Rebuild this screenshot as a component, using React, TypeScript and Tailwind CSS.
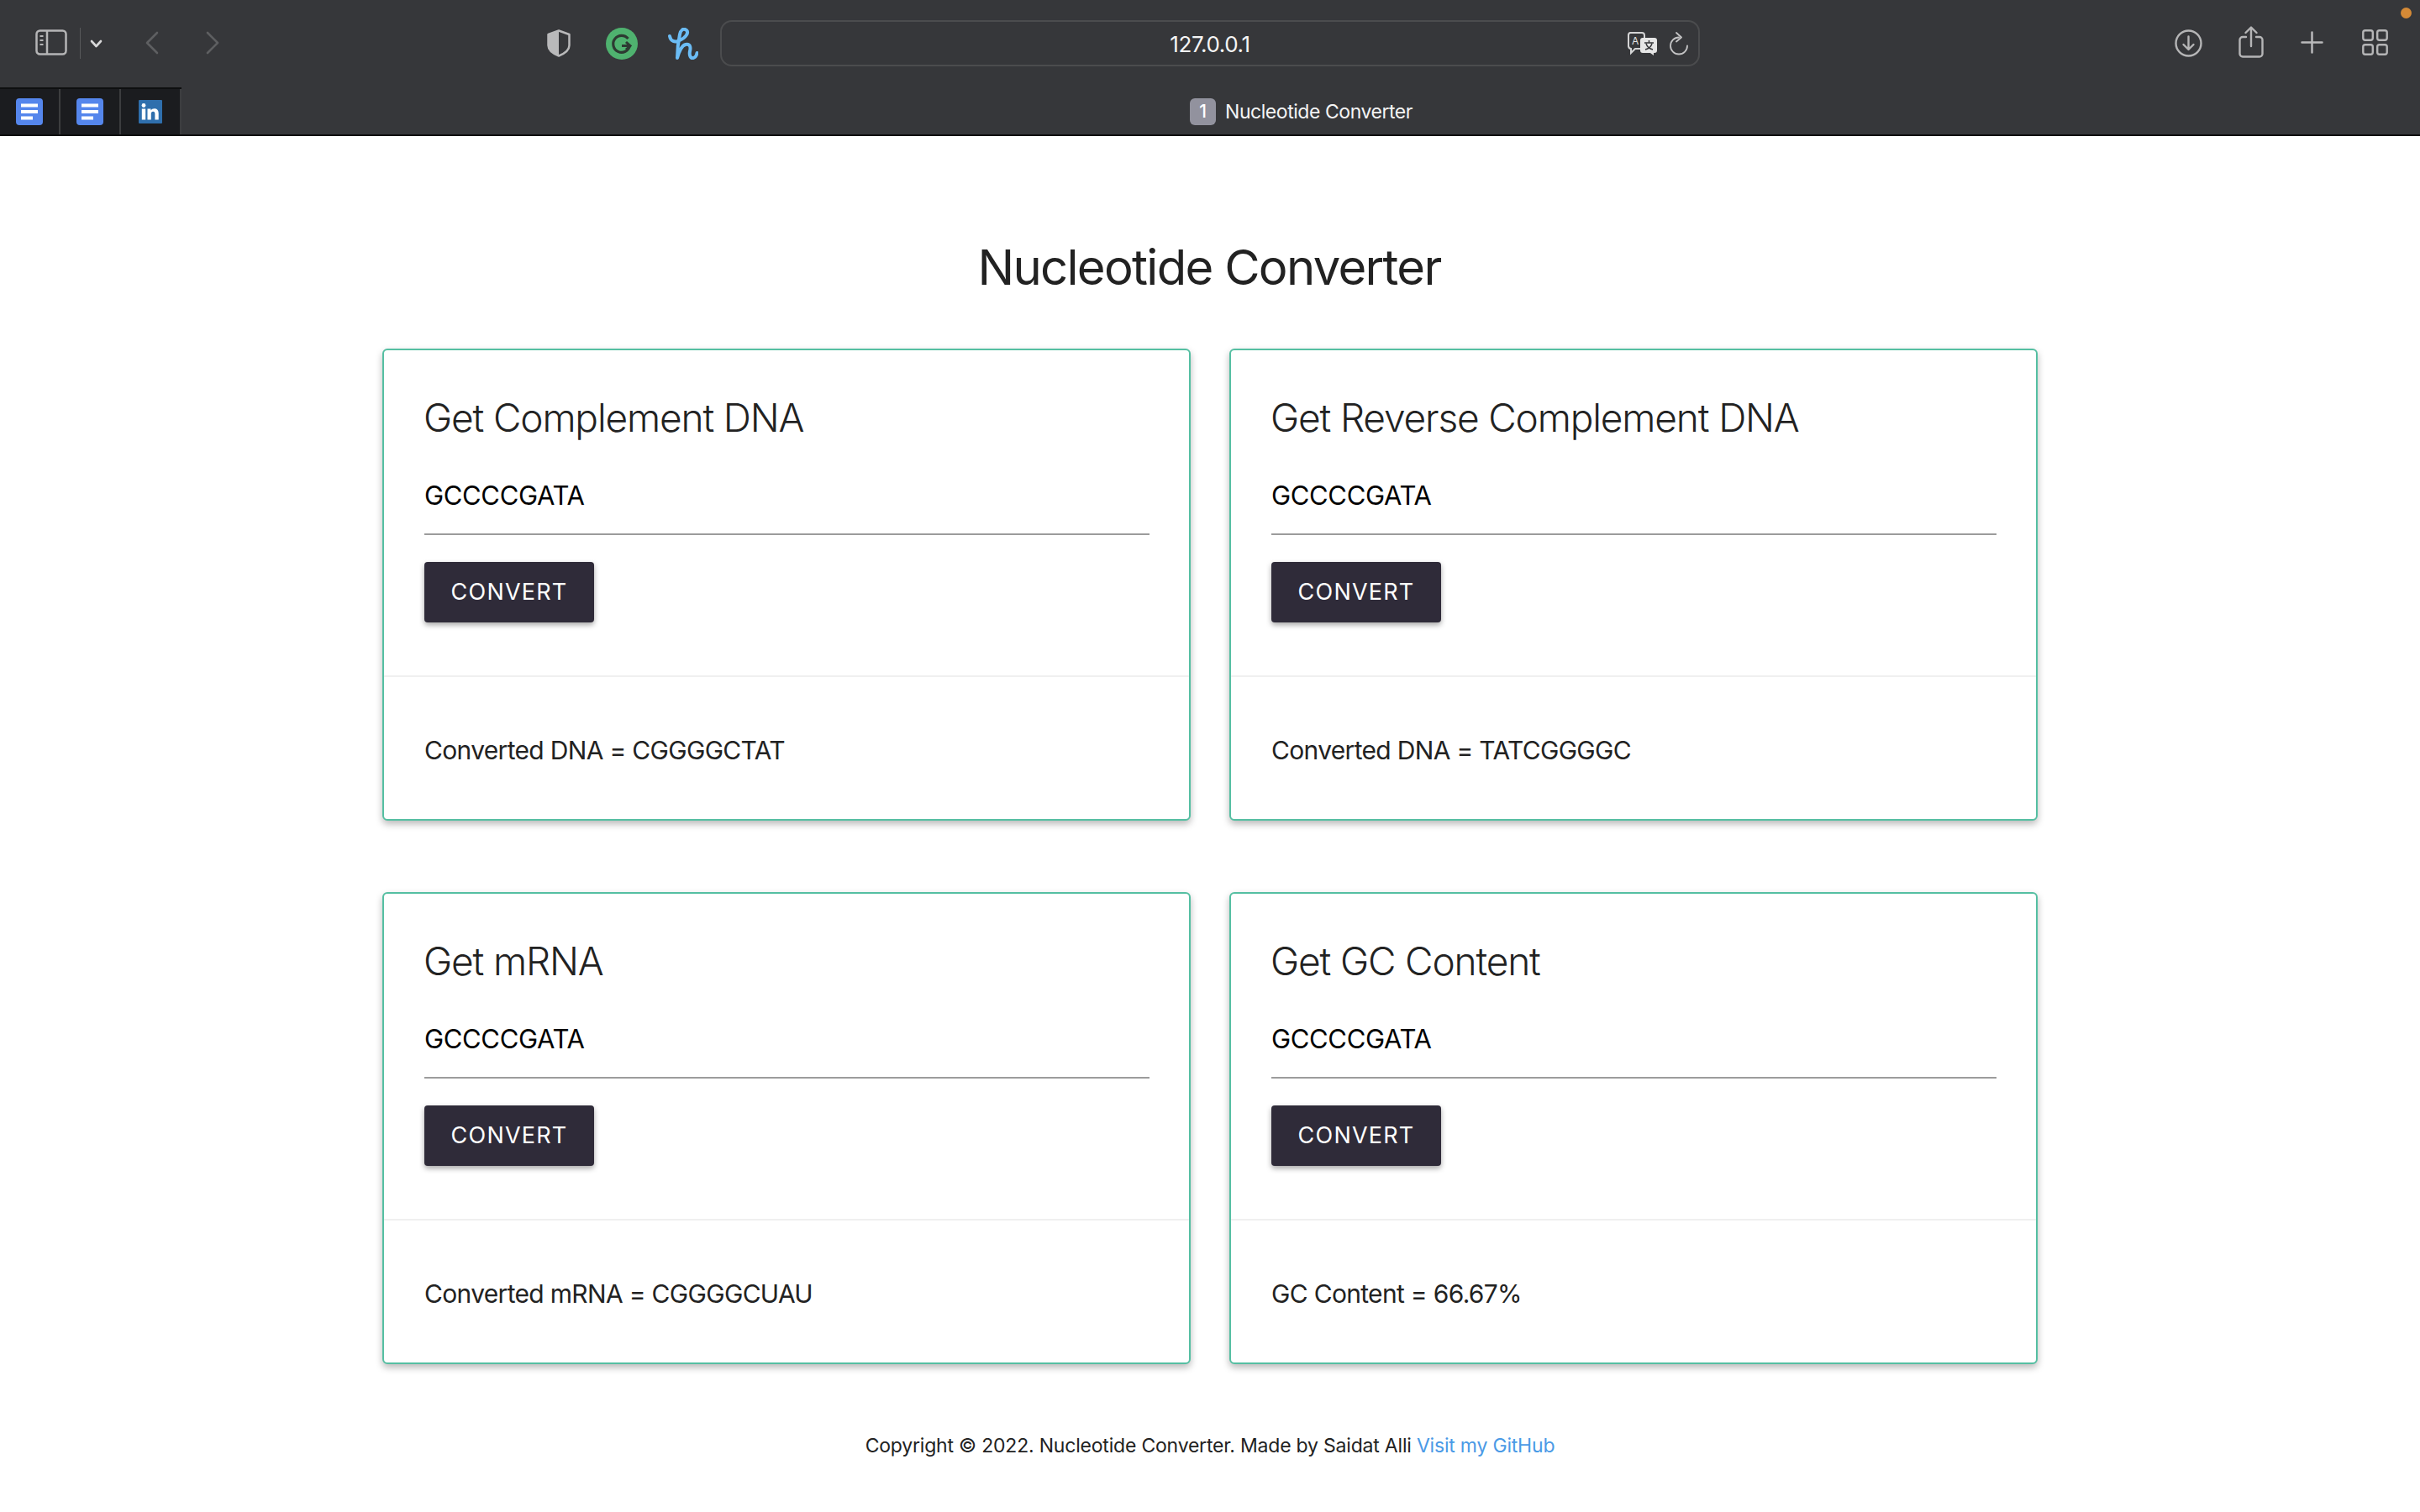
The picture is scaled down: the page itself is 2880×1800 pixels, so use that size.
import React from "react";

function Doc() {
  return (
    <svg width="32" height="32" viewBox="0 0 32 32">
      <rect x="0" y="0" width="32" height="32" rx="4" fill="#5586ec" />
      <rect x="6" y="6.5" width="20" height="4" fill="#fff" />
      <rect x="6" y="14" width="20" height="4" fill="#fff" />
      <rect x="6" y="21.5" width="14" height="4" fill="#fff" />
    </svg>
  );
}

function Linked() {
  return (
    <svg width="28" height="28" viewBox="0 0 28 28">
      <rect width="28" height="28" rx="1" fill="#2f6fad" />
      <circle cx="6" cy="6.5" r="2.4" fill="#fff" />
      <rect x="3.8" y="10.5" width="4.4" height="13" fill="#fff" />
      <path d="M10.5 10.5h4v2c1-1.6 2.4-2.3 4.2-2.3 3.300 0 5 2 5 5.500v7.800h-4.300v-7c0-1.900-.7-2.800-2.200-2.800s-2.400 1-2.400 2.800v7h-4.300z" fill="#fff" />
    </svg>
  );
}

function Toolbar() {
  return (
    <header className="h-[162px] bg-[#36373a] border-b-2 border-[#0c0c0d] flex flex-col relative shrink-0">
      <div className="h-[104px] flex items-start relative">
        <div className="absolute left-[42px] top-[35px]">
          <svg width="38" height="31" viewBox="0 0 38 31" fill="none" stroke="#b5b5b6" strokeWidth="2.5">
            <rect x="1.500" y="1.500" width="35" height="28" rx="4" />
            <path d="M14 1.500v28" />
            <path d="M5.500 8h4M5.500 13h4M5.500 18h4" strokeWidth="2" />
          </svg>
        </div>
        <div className="absolute left-[95px] top-[33px] w-px h-[37px] bg-[#57585a]" />
        <div className="absolute left-[107px] top-[47px]">
          <svg width="15" height="10" viewBox="0 0 15 10" fill="none" stroke="#d8d8d9" strokeWidth="2.600" strokeLinecap="round" strokeLinejoin="round">
            <path d="M2 2l5.500 6L13 2" />
          </svg>
        </div>
        <div className="absolute left-[173px] top-[37px]">
          <svg width="16" height="28" viewBox="0 0 16 28" fill="none" stroke="#5e5f61" strokeWidth="2.600" strokeLinecap="round" strokeLinejoin="round">
            <path d="M14 2L2 14l12 12" />
          </svg>
        </div>
        <div className="absolute left-[245px] top-[37px]">
          <svg width="16" height="28" viewBox="0 0 16 28" fill="none" stroke="#5e5f61" strokeWidth="2.600" strokeLinecap="round" strokeLinejoin="round">
            <path d="M2 2l12 12L2 26" />
          </svg>
        </div>
        <div className="absolute left-[651px] top-[35px]">
          <svg width="28" height="33" viewBox="0 0 28 33">
            <path d="M14 1.500L26.500 6v13c0 5.500-5 9.500-12.500 12.500C6.500 28.500 1.500 24.500 1.500 19V6z" fill="none" stroke="#b9b9ba" strokeWidth="2.500" strokeLinejoin="round" />
            <path d="M14 1.500L1.500 6v13c0 5.500 5 9.500 12.500 12.500z" fill="#b9b9ba" />
          </svg>
        </div>
        <div className="absolute left-[721px] top-[33px]">
          <svg width="38" height="38" viewBox="0 0 38 38" fill="none">
            <circle cx="19" cy="19" r="19" fill="#4fb26f" />
            <path d="M26.500 13A10 10 0 1 0 28.500 21.500" stroke="#2d3a32" strokeWidth="3.200" />
            <path d="M19 21.500H29M24 17l5 4.500-5 4.500" stroke="#2d3a32" strokeWidth="3" />
          </svg>
        </div>
        <div className="absolute left-[795px] top-[33px]">
          <svg width="36" height="38" viewBox="0 0 36 38" fill="none" stroke="#6bbcf5" strokeWidth="4" strokeLinecap="round" strokeLinejoin="round">
            <path d="M2 10C3 16 8 18 14 15C21 12 25 6 22 3C18 0 15 3 14 8C12 17 11 27 11 36C13 29 16 21 21 20C27 19 27 24 26 28C25 33 27 37 30 36C32 35.500 34 33 34.500 30" />
          </svg>
        </div>
        <div className="absolute left-[857px] top-[24px] w-[1166px] h-[55px] rounded-[14px] border-2 border-[#4b4c4e] flex items-center justify-center">
          <span className="text-[26px] text-[#f4f4f4] font-['Inter',sans-serif] tracking-[-0.4px] pt-[2px]">127.0.0.1</span>
          <div className="absolute left-[1077px] top-[12px]">
            <svg width="37" height="28" viewBox="0 0 37 28" fill="none">
              <path d="M4 1h14a3 3 0 0 1 3 3v13a3 3 0 0 1-3 3H10l-5 5v-5a3.500 3.500 0 0 1-3-3V4a3 3 0 0 1 2-3z" stroke="#d4d4d5" strokeWidth="2" fill="#36373a" />
              <text x="6" y="15" fontSize="12" fill="#e4e4e4" fontFamily="Inter, sans-serif">A</text>
              <path d="M19 7h14a3 3 0 0 1 3 3v12a3 3 0 0 1-3 3h-1v3l-4-3h-9a3 3 0 0 1-3-3V10a3 3 0 0 1 3-3z" fill="#e6e6e6" />
              <path d="M21 13h11M26.500 10v3M23 14c1 3 4 6 8 7M30 14c-1 3-4 6-8 7" stroke="#36373a" strokeWidth="1.500" />
            </svg>
          </div>
          <div className="absolute left-[1127px] top-[12px]">
            <svg width="24" height="28" viewBox="0 0 24 28" fill="none" stroke="#c4c4c5" strokeWidth="1.800" strokeLinecap="round" strokeLinejoin="round">
              <path d="M12 6.500A10 10 0 1 0 22 16.500" />
              <path d="M9 1l6 5.500-6 5" />
            </svg>
          </div>
        </div>
        <div className="absolute left-[2588px] top-[35px]">
          <svg width="33" height="33" viewBox="0 0 33 33" fill="none" stroke="#b5b5b6" strokeWidth="2.400" strokeLinecap="round" strokeLinejoin="round">
            <circle cx="16.500" cy="16.500" r="15" />
            <path d="M16.500 8.500v15M10.500 18l6 6 6-6" />
          </svg>
        </div>
        <div className="absolute left-[2664px] top-[31px]">
          <svg width="30" height="38" viewBox="0 0 30 38" fill="none" stroke="#b5b5b6" strokeWidth="2.400" strokeLinecap="round" strokeLinejoin="round">
            <path d="M9 13H5a3.500 3.500 0 0 0-3.500 3.500V33A3.500 3.500 0 0 0 5 36.500h20a3.500 3.500 0 0 0 3.500-3.500V16.500A3.500 3.500 0 0 0 25 13h-4" />
            <path d="M15 24V2M8.500 8L15 1.500 21.500 8" />
          </svg>
        </div>
        <div className="absolute left-[2738px] top-[37px]">
          <svg width="27" height="27" viewBox="0 0 27 27" fill="none" stroke="#b9b9ba" strokeWidth="2.500" strokeLinecap="round">
            <path d="M13.500 1.500v24M1.500 13.500h24" />
          </svg>
        </div>
        <div className="absolute left-[2811px] top-[35px]">
          <svg width="31" height="31" viewBox="0 0 31 31" fill="none" stroke="#b5b5b6" strokeWidth="2.400">
            <rect x="1.300" y="1.300" width="11.500" height="11.500" rx="2.500" />
            <rect x="18.200" y="1.300" width="11.500" height="11.500" rx="2.500" />
            <rect x="1.300" y="18.200" width="11.500" height="11.500" rx="2.500" />
            <rect x="18.200" y="18.200" width="11.500" height="11.500" rx="2.500" />
          </svg>
        </div>
        <div className="absolute left-[2857px] top-[9px] w-[13px] h-[13px] rounded-full bg-[#d58a36]" />
      </div>
      <div className="flex-1 flex relative">
        <div className="flex h-full border-t-2 border-[#0e0f10] bg-[#1b1c1f]">
          <div className="w-[72px] border-r-2 border-[#3c3d3f] flex items-center justify-center"><Doc /></div>
          <div className="w-[72px] border-r-2 border-[#3c3d3f] flex items-center justify-center"><Doc /></div>
          <div className="w-[72px] border-r-2 border-[#3c3d3f] flex items-center justify-center"><Linked /></div>
        </div>
        <div className="absolute left-[1416px] top-[13px] flex items-center h-[32px] gap-[11px]">
          <span className="w-[31px] h-[32px] rounded-[6px] bg-[#92929e] text-white text-[21px] font-medium flex items-center justify-center font-['Inter',sans-serif]">1</span>
          <span className="text-[23px] text-[#f4f4f4] font-['Inter',sans-serif] tracking-[-0.45px]">Nucleotide Converter</span>
        </div>
      </div>
    </header>
  );
}

function Card({ title, result }: { title: string; result: string }) {
  return (
    <section className="h-[562px] bg-white border-2 border-[#55bfa2] rounded-[6px] shadow-[0_4px_8px_rgba(0,0,0,0.28)] flex flex-col">
      <div className="h-[389px] border-b-2 border-[#f0f0f0] pl-[48px] pr-[47px] pt-[48px] flex flex-col">
        <h2 className="-ml-[1px] text-[46px] leading-[64px] text-[#222] font-light tracking-[-1.15px] font-['Inter',sans-serif]">{title}</h2>
        <div className="mt-[41px] h-[67px] border-b-2 border-[#9c9c9c] text-[31px] leading-[40px] text-black tracking-[-0.35px] font-['Inter',sans-serif]">GCCCCGATA</div>
        <button className="mt-[32px] w-[202px] h-[72px] bg-[#2f2b39] rounded-[4px] text-white text-[27px] tracking-[1.2px] font-normal shadow-[0_3px_6px_rgba(0,0,0,0.35)] font-['Inter',sans-serif]">CONVERT</button>
      </div>
      <div className="flex-1 px-[48px] pt-[65px] text-[30px] leading-[44px] text-[#222] tracking-[-0.68px] font-['Inter',sans-serif]">{result}</div>
    </section>
  );
}

export default function App() {
  return (
    <div className="w-[2880px] h-[1800px] bg-white flex flex-col overflow-hidden font-['Inter',sans-serif]">
      <Toolbar />
      <main className="flex-1 flex flex-col items-center">
        <h1 className="mt-[120px] -ml-[2px] text-[58px] leading-[72px] text-[#222] font-normal tracking-[-1.7px]">Nucleotide Converter</h1>
        <div className="mt-[61px] w-[1970px] grid grid-cols-2 gap-x-[46px] gap-y-[85px]">
          <Card title="Get Complement DNA" result="Converted DNA = CGGGGCTAT" />
          <Card title="Get Reverse Complement DNA" result="Converted DNA = TATCGGGGC" />
          <Card title="Get mRNA" result="Converted mRNA = CGGGGCUAU" />
          <Card title="Get GC Content" result="GC Content = 66.67%" />
        </div>
        <footer className="mt-[81px] text-[23px] leading-[32px] text-[#222] tracking-[-0.2px]">
          Copyright © 2022. Nucleotide Converter. Made by Saidat Alli <a className="text-[#4a9ae6]">Visit my GitHub</a>
        </footer>
      </main>
    </div>
  );
}
